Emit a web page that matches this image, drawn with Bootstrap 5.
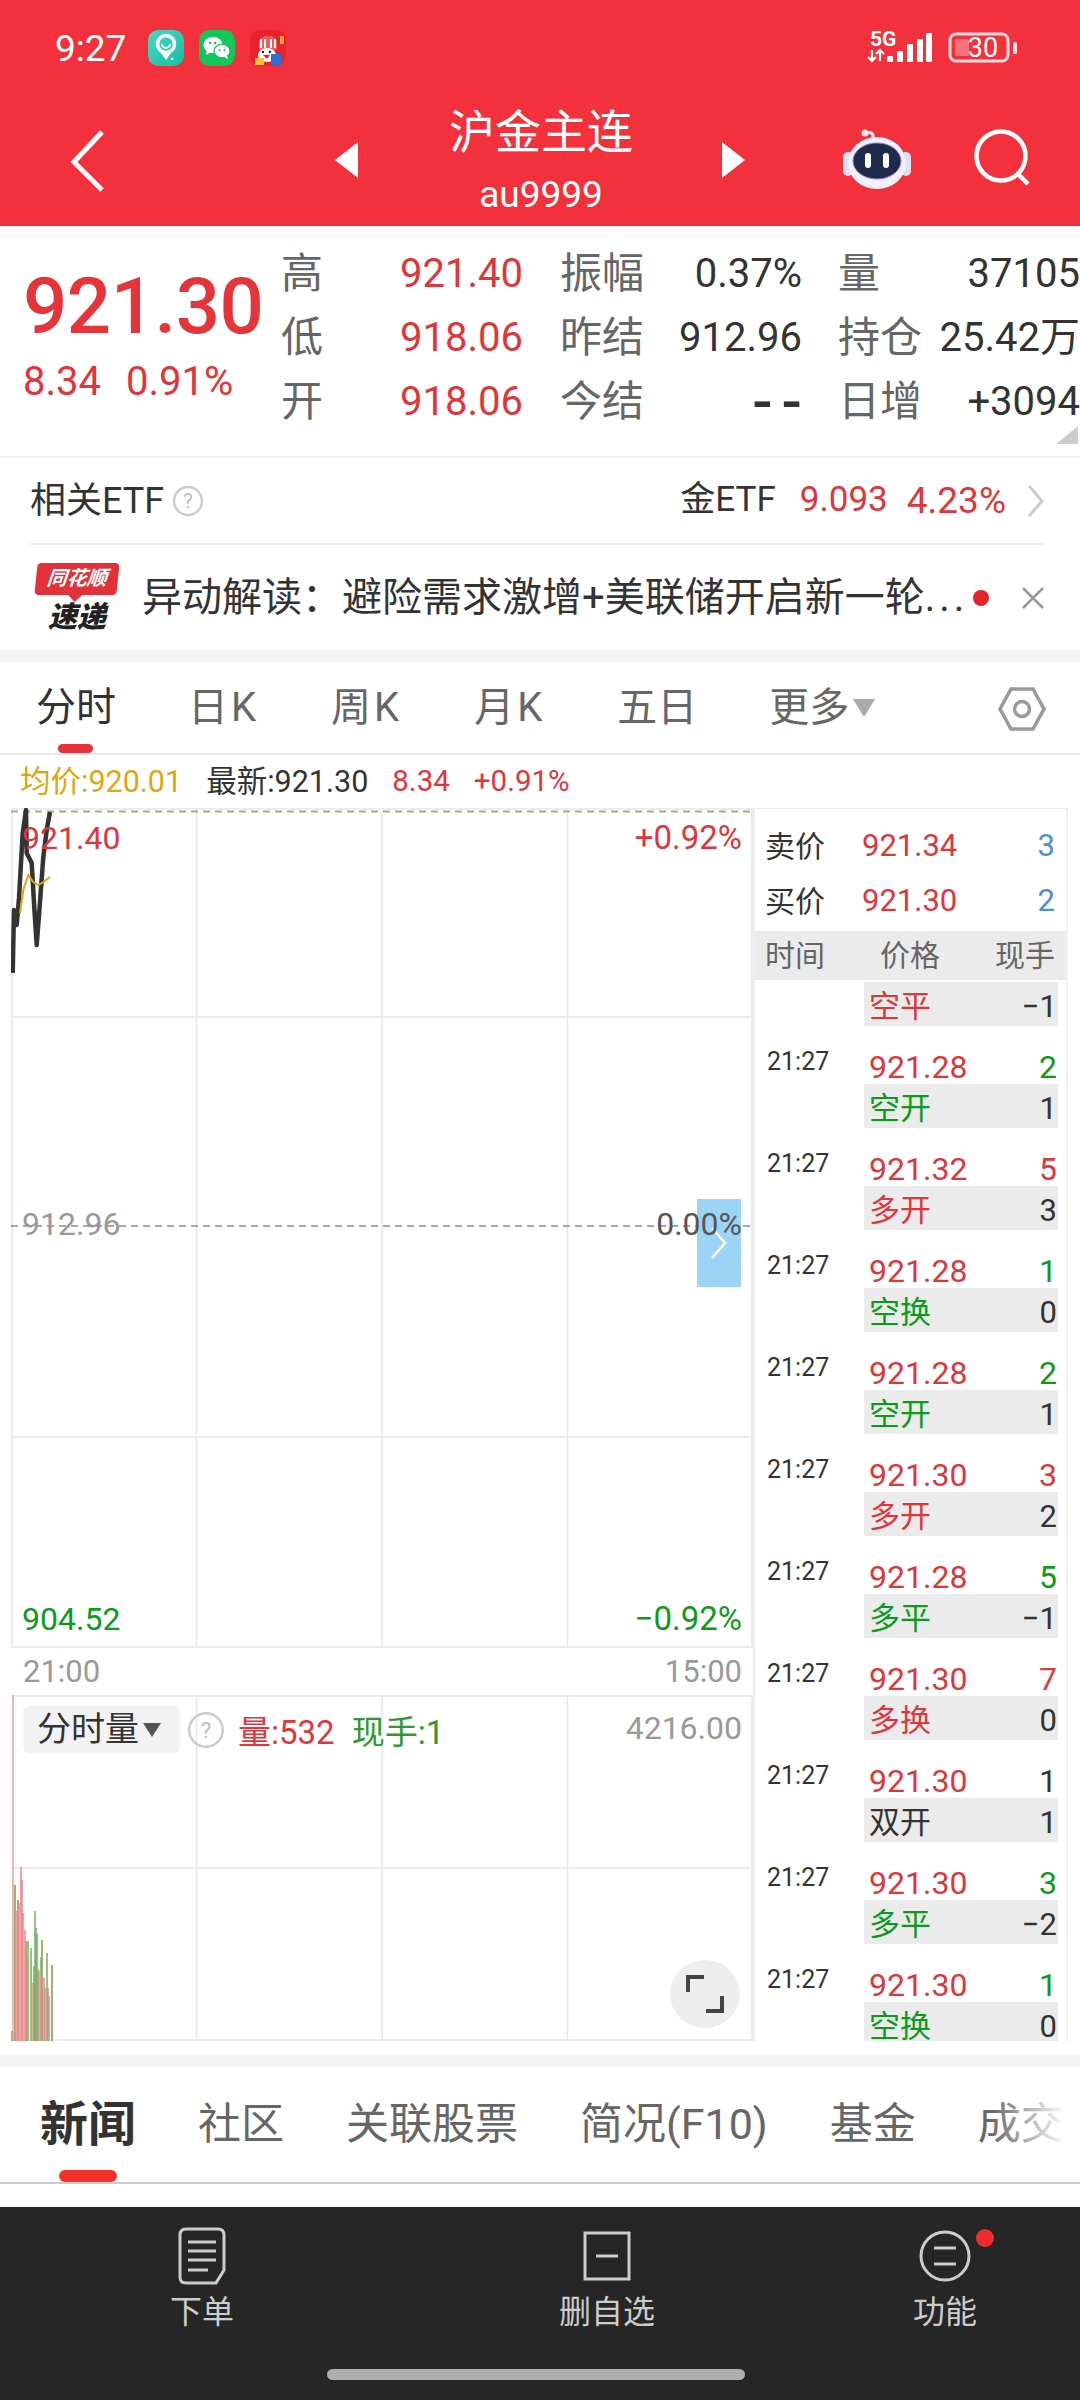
<!DOCTYPE html>
<html lang="zh-CN">
<head>
<meta charset="utf-8">
<title>沪金主连 au9999</title>
<link href="https://cdn.jsdelivr.net/npm/bootstrap@5.3.0/dist/css/bootstrap.min.css" rel="stylesheet">
<style>
html,body{margin:0;background:#fff}
body{font-family:Roboto,"Noto Sans CJK SC",sans-serif;color:#333}
.screen{width:1080px;height:2400px;overflow:hidden}
.up{color:#e0353b}.dn{color:#0b9b1b}.ink{color:#333}.mute{color:#555}.pale{color:#999}
.appbar{height:226px;background:#f2313c;color:#fff}
.status{height:96px;padding:0 62px 0 55px}
.clock{font-size:37px;width:93px;line-height:1}
.appico{width:36px;height:36px;border-radius:10px;margin-right:15px;display:block}
.sig-wrap{position:relative;width:66px;height:32px;margin-right:15px}
.sig-5g{position:absolute;left:3px;top:-3px;font-size:21px;font-weight:700;line-height:1}
.batt-wrap{position:relative;width:70px;height:32px}
.batt-num{position:absolute;left:14px;top:0;width:42px;text-align:center;font-size:27px;line-height:32px}
.navline{height:130px}
.back{margin-left:68px;margin-top:32px;width:40px}
.title-box{width:184px;white-space:nowrap;flex:none}
.title-cn{font-size:46px;line-height:54px;margin-top:9px}
.title-code{font-size:37px;line-height:44px;margin-top:14px}
.tri{margin-top:46px}
.tri-l{margin-left:227px;margin-right:90px}
.tri-r{margin-left:88px}
.robot{margin-top:32px;margin-left:98px}
.lens{margin-top:33px;margin-left:63px}
.quote{height:232px;border-bottom:2px solid #f0f0f0;position:relative}
.bigcol{width:281px;padding-left:23px;flex:none}
.bigprice{font-size:78px;line-height:90px;font-weight:500;color:#e5343a;margin-top:36px;letter-spacing:-.5px}
.bigsub{font-size:40px;line-height:44px;color:#e0353b;margin-top:8px;word-spacing:15px}
.qgrid{display:grid;grid-template-columns:100px 142px 37px 83px 159px 36px 80px 162px;grid-auto-rows:64px;padding-top:16px;font-size:40px;align-items:center;line-height:1}
.qlab{font-size:42px;color:#666;white-space:nowrap}
.qval{text-align:right;white-space:nowrap}
.qdash{font-size:60px;letter-spacing:9px;margin-right:-9px;font-weight:500}
.corner{position:absolute;right:2px;bottom:12px}
.etf{height:87px;margin:0 35px 0 30px;border-bottom:2px solid #eee;font-size:36px}
.etf-val{font-size:35px}
.etf-pct{font-size:37px}
.news{height:105px;padding:0 36px;font-size:40px;white-space:nowrap}
.logo{width:82px;flex:none;text-align:center;margin-right:24px}
.logo-top{background:#e23138;color:#fff;font-size:20px;font-weight:700;font-style:italic;line-height:30px;border-radius:4px;transform:skewX(-6deg);position:relative;height:32px}
.logo-top::after{content:"";position:absolute;left:34px;bottom:-7px;border:7px solid transparent;border-bottom:0;border-top-color:#e23138}
.logo-btm{font-size:29px;font-weight:900;font-style:italic;line-height:32px;color:#222;margin-top:6px}
.ellip{letter-spacing:4px}
.dot{width:16px;height:16px;border-radius:50%;background:#e5232b;flex:none;margin-left:5px}
.sep{height:12px;background:#f4f4f4}
.tabs-a{height:93px;border-bottom:2px solid #eaeaea;padding-left:36px;font-size:40px;color:#666;position:relative;gap:72px}
.tabs-a .on{color:#333}
.tab-k{letter-spacing:3px}
.bar-a{position:absolute;left:58px;bottom:0;width:35px;height:9px;background:#e5343a;border-radius:5px}
.hexbtn{position:absolute;left:998px;top:24px}
.infoline{height:53px;padding-left:20px;font-size:30.5px;gap:24px}
.infoline .up{font-size:29.5px}
.gold{color:#e0a50f}
.plot{height:1233px;padding-left:11px}
.leftcol{width:742px;flex:none}
.mainc{height:840px;position:relative;font-size:32px}
.full-svg{position:absolute;left:0;top:0;display:block}
.mainlabels{position:absolute;inset:0;padding:10px 11px 9px 11px}
.lblrow{height:40px;line-height:40px}
.lbl-pct{font-size:33px}
.midrow{margin-bottom:10px}
.bluetab{position:absolute;left:686px;top:391px;width:44px;height:88px;background:#9dd3f6}
.timerow{height:47px;font-size:31px;color:#999;padding:0 11px 0 12px;line-height:47px}
.volc{height:346px;position:relative}
.vol-top{position:absolute;left:12px;right:11px;top:11px;font-size:34px;line-height:47px}
.selbtn{background:#f2f2f2;border-radius:6px;height:47px;width:157px;padding-left:14px;flex:none;color:#333}
.qmark{width:38px;height:38px;flex:none;margin:5px 13px 0 7px}
.volnum{font-size:33px;margin-right:17px;margin-top:3px}
.vol-max{margin-left:auto;color:#999;font-size:32px;line-height:36px;margin-top:4px}
.expand{position:absolute;left:659px;top:265px;width:70px;height:68px;border-radius:50%;background:#eee}
.panel{width:315px;flex:none;height:1233px;overflow:hidden;border-top:1px solid #eee;border-right:2px solid #f0f0f0;border-left:2px solid #eee;padding-top:10px;font-size:30px}
.ph{height:55px;padding:0 11px 0 10px}
.ph-price{margin-left:37px;font-size:31px}
.ph-n{margin-left:auto;color:#4a90d9;font-size:31px}
.phead{height:49px;background:#ebebeb;color:#666;padding:0 11px 0 10px;margin-top:2px;justify-content:space-between}
.trade{height:102px}
.trade-first{height:46px;padding-top:2px}
.tm{width:109px;padding-left:12px;flex:none;font-size:25px;line-height:30px;padding-top:21px;color:#333}
.tm-empty{width:109px;flex:none}
.tbody{width:194px;flex:none}
.tline{height:58px;padding:24px 1px 0 5px;line-height:34px;font-size:32px}
.tbox{height:44px;background:#ebebeb;padding:0 1px 0 5px;line-height:50px;font-size:31px}
.cnt{font-size:31px;color:#333}
.tabs-b{height:117px;border-bottom:2px solid #ccc;padding-left:40px;font-size:43px;color:#666;gap:62px;white-space:nowrap;position:relative;overflow:hidden}
.tabs-b .on{font-size:48px;font-weight:700;color:#333}
.bar-b{position:absolute;left:59px;bottom:0;width:58px;height:12px;background:#f8302c;border-radius:6px}
.fade-end{position:absolute;right:0;top:0;bottom:0;width:90px;background:linear-gradient(to right,rgba(255,255,255,0),#fff 85%)}
.footbar{height:193px;background:#262626;color:#ccc;margin-top:23px;position:relative;display:grid;grid-template-columns:404px 406px 270px;font-size:32px;text-align:center}
.fcell{padding-top:19px;position:relative}
.ficon{height:60px;display:block;margin:0 auto}
.flabel{line-height:40px;margin-top:6px}
.fdot{position:absolute;left:166px;top:22px;width:18px;height:18px;border-radius:50%;background:#ee2c2c}
.homebar{position:absolute;left:327px;top:162px;width:418px;height:11px;border-radius:6px;background:#adadad}
.gap-top{height:14px}
</style>
</head>
<body>
<div class="screen d-flex flex-column">

<header class="appbar flex-shrink-0">
  <div class="status d-flex align-items-center">
    <span class="clock">9:27</span>
    <svg class="appico" viewBox="0 0 36 36"><defs><linearGradient id="g1" x1="0" y1="0" x2="1" y2="1"><stop offset="0" stop-color="#4fd6bf"/><stop offset="1" stop-color="#10c0a8"/></linearGradient></defs><rect width="36" height="36" rx="9" fill="url(#g1)"/><circle cx="18" cy="14" r="8.500" fill="none" stroke="#fff" stroke-width="3.500"/><path d="M14 14a4 4 0 0 0 8 0" fill="none" stroke="#fff" stroke-width="2"/><path d="M13 23l5 7 5-7z" fill="#fff"/><circle cx="24" cy="29" r="1.300" fill="#fff"/></svg>
    <svg class="appico" viewBox="0 0 36 36"><rect width="36" height="36" rx="9" fill="#12c65a"/><ellipse cx="14" cy="15" rx="9.500" ry="8" fill="#fff"/><path d="M8 20l-1 5 5-3z" fill="#fff"/><ellipse cx="23" cy="21" rx="8" ry="6.800" fill="#fff" stroke="#12c65a" stroke-width="1.200"/><path d="M28 25l1 4-4-2z" fill="#fff"/><circle cx="11" cy="13" r="1.200" fill="#12c65a"/><circle cx="16" cy="13" r="1.200" fill="#12c65a"/><circle cx="20.500" cy="20" r="1" fill="#12c65a"/><circle cx="25.500" cy="20" r="1" fill="#12c65a"/></svg>
    <svg class="appico" viewBox="0 0 36 36"><rect width="36" height="36" rx="9" fill="#e8222c"/><path d="M9 10Q18 1 27 10V20H9z" fill="#f25a55"/><path d="M11 9v9M15 9v9M21 9v9M25 9v9" stroke="#fff" stroke-width="2"/><ellipse cx="17" cy="25" rx="9" ry="7" fill="#fff"/><path d="M13 25h7l-3 4z" fill="#d8232a"/><circle cx="13" cy="22" r="1.200" fill="#222"/><circle cx="20" cy="22" r="1.200" fill="#222"/><rect x="5" y="28" width="9" height="7" fill="#f7c52e"/><rect x="21" y="24" width="10" height="11" fill="#2d6fd8"/><rect x="30" y="6" width="4" height="8" fill="#f6a13c"/></svg>
    <div class="ms-auto d-flex align-items-end">
      <div class="sig-wrap">
        <span class="sig-5g">5G</span>
        <svg width="66" height="32" viewBox="0 0 66 32" class="d-block"><path d="M5 18v11M1 25l4 4 4-4M13 29V18M9 22l4-4 4 4" fill="none" stroke="#fff" stroke-width="2.200"/><rect x="20" y="24" width="6" height="6" rx="1" fill="#fff"/><rect x="30" y="19" width="6" height="11" rx="1" fill="#fff"/><rect x="40" y="12" width="6" height="18" rx="1" fill="#fff"/><rect x="50" y="7" width="6" height="23" rx="1" fill="#fff"/><rect x="59" y="1" width="6" height="29" rx="1" fill="#fff"/></svg>
      </div>
      <div class="batt-wrap">
        <svg width="70" height="32" viewBox="0 0 70 32" class="d-block"><rect x="2" y="2" width="58" height="27" rx="6" fill="none" stroke="#ffdcdc" stroke-width="3"/><rect x="7" y="7" width="14" height="17" rx="2" fill="#f7727a"/><rect x="65" y="10" width="4" height="12" rx="1.500" fill="#ffdcdc"/></svg>
        <span class="batt-num">30</span>
      </div>
    </div>
  </div>
  <div class="navline d-flex align-items-start">
    <svg class="back" width="40" height="64" viewBox="0 0 40 64"><path d="M34 4L6 34l28 28" fill="none" stroke="#fff" stroke-width="5"/></svg>
    <svg width="24" height="36" viewBox="0 0 24 36" class="tri tri-l"><path d="M23 0V36L0 18z" fill="#fff"/></svg>
    <div class="text-center title-box">
      <div class="title-cn">沪金主连</div>
      <div class="title-code">au9999</div>
    </div>
    <svg width="24" height="36" viewBox="0 0 24 36" class="tri tri-r"><path d="M1 0V36L24 18z" fill="#fff"/></svg>
    <svg class="robot" width="68" height="62" viewBox="0 0 68 62"><path d="M30 10Q31 3 23 5" fill="none" stroke="#f1e8f4" stroke-width="3"/><circle cx="22" cy="5" r="3.500" fill="#f1e8f4"/><rect x="0" y="24" width="10" height="24" rx="5" fill="#dfe0f5"/><rect x="58" y="24" width="10" height="24" rx="5" fill="#dfe0f5"/><ellipse cx="34" cy="35" rx="29" ry="26" fill="#f2f0fa"/><ellipse cx="34" cy="33" rx="24" ry="18" fill="#1f2a4a" stroke="#8c7be0" stroke-width="1"/><rect x="22" y="25" width="6" height="15" rx="3" fill="#fff"/><rect x="40" y="25" width="6" height="15" rx="3" fill="#fff"/></svg>
    <svg class="lens" width="60" height="60" viewBox="0 0 60 60"><circle cx="27" cy="27" r="24.500" fill="none" stroke="#fff" stroke-width="4.500"/><path d="M44 45l10 10" stroke="#fff" stroke-width="4.500"/></svg>
  </div>
</header>

<section class="quote d-flex flex-shrink-0">
  <div class="bigcol">
    <div class="bigprice">921.30</div>
    <div class="bigsub">8.34 0.91%</div>
  </div>
  <div class="qgrid">
    <span class="qlab">高</span><span class="qval up">921.40</span><span></span><span class="qlab">振幅</span><span class="qval ink">0.37%</span><span></span><span class="qlab">量</span><span class="qval ink">37105</span>
    <span class="qlab">低</span><span class="qval up">918.06</span><span></span><span class="qlab">昨结</span><span class="qval ink">912.96</span><span></span><span class="qlab">持仓</span><span class="qval ink">25.42万</span>
    <span class="qlab">开</span><span class="qval up">918.06</span><span></span><span class="qlab">今结</span><span class="qval ink qdash">--</span><span></span><span class="qlab">日增</span><span class="qval ink">+3094</span>
  </div>
  <svg class="corner" width="22" height="18" viewBox="0 0 22 18"><path d="M22 0V18H0z" fill="#ccc"/></svg>
</section>

<section class="etf d-flex align-items-center flex-shrink-0">
  <span class="ink">相关ETF</span>
  <svg class="ms-2" width="32" height="32" viewBox="0 0 32 32"><circle cx="16" cy="16" r="14" fill="none" stroke="#ccc" stroke-width="2.500"/><text x="16" y="23" text-anchor="middle" font-size="20" fill="#bbb" font-family="Roboto">?</text></svg>
  <span class="ms-auto ink etf-val">金ETF</span>
  <span class="up etf-val" style="margin-left:24px">9.093</span>
  <span class="up etf-pct" style="margin-left:19px">4.23%</span>
  <svg width="18" height="32" viewBox="0 0 18 32" style="margin-left:21px"><path d="M2 1l13 15L2 31" fill="none" stroke="#ccc" stroke-width="3"/></svg>
</section>

<section class="news d-flex align-items-center flex-shrink-0">
  <div class="logo">
    <div class="logo-top">同花顺</div>
    <div class="logo-btm">速递</div>
  </div>
  <span class="ink">异动解读：避险需求激增+美联储开启新一轮<span class="ellip">...</span></span>
  <span class="dot"></span>
  <svg class="ms-auto" width="24" height="24" viewBox="0 0 24 24" style="margin-right:-1px"><path d="M2 2l20 20M22 2L2 22" stroke="#999" stroke-width="2.500"/></svg>
</section>
<div class="sep flex-shrink-0"></div>

<nav class="tabs-a d-flex align-items-center flex-shrink-0">
  <span class="on">分时</span><span class="tab-k">日K</span><span class="tab-k">周K</span><span class="tab-k">月K</span><span>五日</span>
  <span class="d-flex align-items-center">更多<svg width="22" height="18" viewBox="0 0 22 18" class="ms-1"><path d="M0 0H22L11 18z" fill="#aaa"/></svg></span>
  <svg class="hexbtn" width="48" height="46" viewBox="0 0 48 46"><path d="M13 3H35L46 23 35 43H13L2 23z" fill="none" stroke="#999" stroke-width="3.500"/><circle cx="24" cy="23" r="7.500" fill="none" stroke="#999" stroke-width="3.500"/></svg>
  <span class="bar-a"></span>
</nav>

<div class="infoline d-flex align-items-center flex-shrink-0">
  <span class="gold">均价:920.01</span><span class="ink">最新:921.30</span><span class="up">8.34</span><span class="up">+0.91%</span>
</div>

<section class="plot d-flex flex-shrink-0">
  <div class="leftcol">
    <div class="mainc">
      <svg class="full-svg" width="742" height="840" viewBox="0 0 742 840">
        <g stroke="#ececec" stroke-width="2"><path d="M0 1H742M0 209H742M0 629H742M0 839H742M1 0V840M741 0V840" fill="none"/></g>
        <g stroke="#e8e8e8" stroke-width="1.500"><path d="M185.500 0V840M371 0V840M556.500 0V840"/></g>
        <path d="M0 3.500H742" stroke="#b8a67e" stroke-width="2" stroke-dasharray="7 5"/>
        <path d="M0 418H742" stroke="#8a8a8a" stroke-width="1.500" stroke-dasharray="7 5"/>
        <polyline points="1.700,165 3,102 5.700,117 8,90 11.700,25 15,2 15.700,45 20.700,55 23,95 25.700,137 29,94 32.300,49 36,20 39,4" fill="none" stroke="#333" stroke-width="4.500" stroke-linejoin="round"/>
        <polyline points="9,105 12.300,82 17.300,67 22.300,74 27.300,77 32.300,74 39,69" fill="none" stroke="#e0a50f" stroke-width="2"/>
      </svg>
      <div class="bluetab d-flex align-items-center justify-content-center">
        <svg width="18" height="34" viewBox="0 0 18 34"><path d="M2 2l13 15L2 32" fill="none" stroke="#fff" stroke-width="2.500"/></svg>
      </div>
      <div class="mainlabels d-flex flex-column justify-content-between">
        <div class="lblrow d-flex justify-content-between up"><span>921.40</span><span class="lbl-pct">+0.92%</span></div>
        <div class="lblrow d-flex justify-content-between midrow"><span class="pale">912.96</span><span class="mute">0.00%</span></div>
        <div class="lblrow d-flex justify-content-between dn"><span>904.52</span><span class="lbl-pct">−0.92%</span></div>
      </div>
    </div>
    <div class="timerow d-flex justify-content-between"><span>21:00</span><span>15:00</span></div>
    <div class="volc">
      <svg class="full-svg" width="742" height="346" viewBox="0 0 742 346">
        <g stroke="#ececec" stroke-width="2" fill="none"><path d="M0 1H742M0 173H742M0 345H742M741 0V346"/></g>
        <g stroke="#e8e8e8" stroke-width="1.500"><path d="M185.500 0V346M371 0V346M556.500 0V346"/></g>
        <path d="M2 0V346" stroke="#f3b6b6" stroke-width="2"/>
        <path d="M1 336V346" stroke="#f08a8a" stroke-width="2"/>
        <g stroke-width="1.600" fill="none">
          <path stroke="#8e9a55" d="M4 190V346M7 205V346M15 246V346M31 245V346M41 270V346"/>
          <path stroke="#ef8b8e" d="M5 216V346M8 208V346M10 172V346M11 185V346M12 218V346M14 235V346M16 262V346M22 288V346M27 274V346M28 276V346M31 280V346M33 283V346M34 293V346M37 293V346M38 301V346"/>
          <path stroke="#78b668" d="M17 246V346M20 253V346M23 271V346M24 216V346M25 233V346M26 239V346M30 262V346M36 258V346"/>
        </g>
      </svg>
      <div class="vol-top d-flex align-items-start">
        <div class="selbtn d-flex align-items-center">分时量<svg width="18" height="14" viewBox="0 0 18 14" class="ms-1"><path d="M0 0H18L9 14z" fill="#555"/></svg></div>
        <svg class="qmark" viewBox="0 0 34 34"><circle cx="17" cy="17" r="15" fill="none" stroke="#ccc" stroke-width="2.200"/><text x="17" y="24" text-anchor="middle" font-size="20" fill="#bbb" font-family="Roboto">?</text></svg>
        <span class="volnum up">量:532</span><span class="volnum" style="color:#2e9a2b">现手:1</span>
        <span class="vol-max">4216.00</span>
      </div>
      <div class="expand d-flex align-items-center justify-content-center">
        <svg width="38" height="38" viewBox="0 0 38 38"><path d="M18 2H2V17M20 36H36V21" fill="none" stroke="#444" stroke-width="4"/></svg>
      </div>
    </div>
  </div>
  <aside class="panel">
    <div class="ph d-flex align-items-center"><span class="ink">卖价</span><span class="ph-price up">921.34</span><span class="ph-n">3</span></div>
    <div class="ph d-flex align-items-center"><span class="ink">买价</span><span class="ph-price up">921.30</span><span class="ph-n">2</span></div>
    <div class="phead d-flex align-items-center"><span>时间</span><span>价格</span><span>现手</span></div>
    <div class="trade-first d-flex"><div class="tm-empty"></div><div class="tbody"><div class="tbox d-flex justify-content-between"><span class="up">空平</span><span class="cnt">−1</span></div></div></div>
    <div class="trade d-flex"><div class="tm">21:27</div><div class="tbody"><div class="tline d-flex justify-content-between"><span class="up">921.28</span><span class="dn">2</span></div><div class="tbox d-flex justify-content-between"><span class="dn">空开</span><span class="cnt">1</span></div></div></div>
    <div class="trade d-flex"><div class="tm">21:27</div><div class="tbody"><div class="tline d-flex justify-content-between"><span class="up">921.32</span><span class="up">5</span></div><div class="tbox d-flex justify-content-between"><span class="up">多开</span><span class="cnt">3</span></div></div></div>
    <div class="trade d-flex"><div class="tm">21:27</div><div class="tbody"><div class="tline d-flex justify-content-between"><span class="up">921.28</span><span class="dn">1</span></div><div class="tbox d-flex justify-content-between"><span class="dn">空换</span><span class="cnt">0</span></div></div></div>
    <div class="trade d-flex"><div class="tm">21:27</div><div class="tbody"><div class="tline d-flex justify-content-between"><span class="up">921.28</span><span class="dn">2</span></div><div class="tbox d-flex justify-content-between"><span class="dn">空开</span><span class="cnt">1</span></div></div></div>
    <div class="trade d-flex"><div class="tm">21:27</div><div class="tbody"><div class="tline d-flex justify-content-between"><span class="up">921.30</span><span class="up">3</span></div><div class="tbox d-flex justify-content-between"><span class="up">多开</span><span class="cnt">2</span></div></div></div>
    <div class="trade d-flex"><div class="tm">21:27</div><div class="tbody"><div class="tline d-flex justify-content-between"><span class="up">921.28</span><span class="dn">5</span></div><div class="tbox d-flex justify-content-between"><span class="dn">多平</span><span class="cnt">−1</span></div></div></div>
    <div class="trade d-flex"><div class="tm">21:27</div><div class="tbody"><div class="tline d-flex justify-content-between"><span class="up">921.30</span><span class="up">7</span></div><div class="tbox d-flex justify-content-between"><span class="up">多换</span><span class="cnt">0</span></div></div></div>
    <div class="trade d-flex"><div class="tm">21:27</div><div class="tbody"><div class="tline d-flex justify-content-between"><span class="up">921.30</span><span class="ink">1</span></div><div class="tbox d-flex justify-content-between"><span class="ink">双开</span><span class="cnt">1</span></div></div></div>
    <div class="trade d-flex"><div class="tm">21:27</div><div class="tbody"><div class="tline d-flex justify-content-between"><span class="up">921.30</span><span class="dn">3</span></div><div class="tbox d-flex justify-content-between"><span class="dn">多平</span><span class="cnt">−2</span></div></div></div>
    <div class="trade d-flex"><div class="tm">21:27</div><div class="tbody"><div class="tline d-flex justify-content-between"><span class="up">921.30</span><span class="dn">1</span></div><div class="tbox d-flex justify-content-between"><span class="dn">空换</span><span class="cnt">0</span></div></div></div>
  </aside>
</section>
<div class="gap-top flex-shrink-0"></div>
<div class="sep flex-shrink-0"></div>

<nav class="tabs-b d-flex align-items-center flex-shrink-0">
  <span class="on">新闻</span><span>社区</span><span>关联股票</span><span>简况(F10)</span><span>基金</span><span>成交明细</span>
  <span class="bar-b"></span>
  <span class="fade-end"></span>
</nav>

<footer class="footbar flex-shrink-0">
  <div class="fcell">
    <svg class="ficon" width="50" height="60" viewBox="0 0 50 60"><path d="M9 3H41Q47 3 47 9V44L39 57H9Q3 57 3 51V9Q3 3 9 3z" fill="none" stroke="#ccc" stroke-width="3"/><path d="M11 16H39M11 25H39M11 34H39M11 44H31" stroke="#ccc" stroke-width="3"/></svg>
    <div class="flabel">下单</div>
  </div>
  <div class="fcell">
    <svg class="ficon" width="50" height="60" viewBox="0 0 50 60"><rect x="3" y="7" width="44" height="46" fill="none" stroke="#ccc" stroke-width="3"/><path d="M14 30H36" stroke="#ccc" stroke-width="3"/></svg>
    <div class="flabel">删自选</div>
  </div>
  <div class="fcell">
    <svg class="ficon" width="52" height="60" viewBox="0 0 52 60"><circle cx="26" cy="30" r="24" fill="none" stroke="#ccc" stroke-width="3"/><path d="M15 22H37M15 38H37" stroke="#ccc" stroke-width="3"/></svg>
    <div class="flabel">功能</div>
    <span class="fdot"></span>
  </div>
  <span class="homebar"></span>
</footer>
</div>
</body>
</html>
